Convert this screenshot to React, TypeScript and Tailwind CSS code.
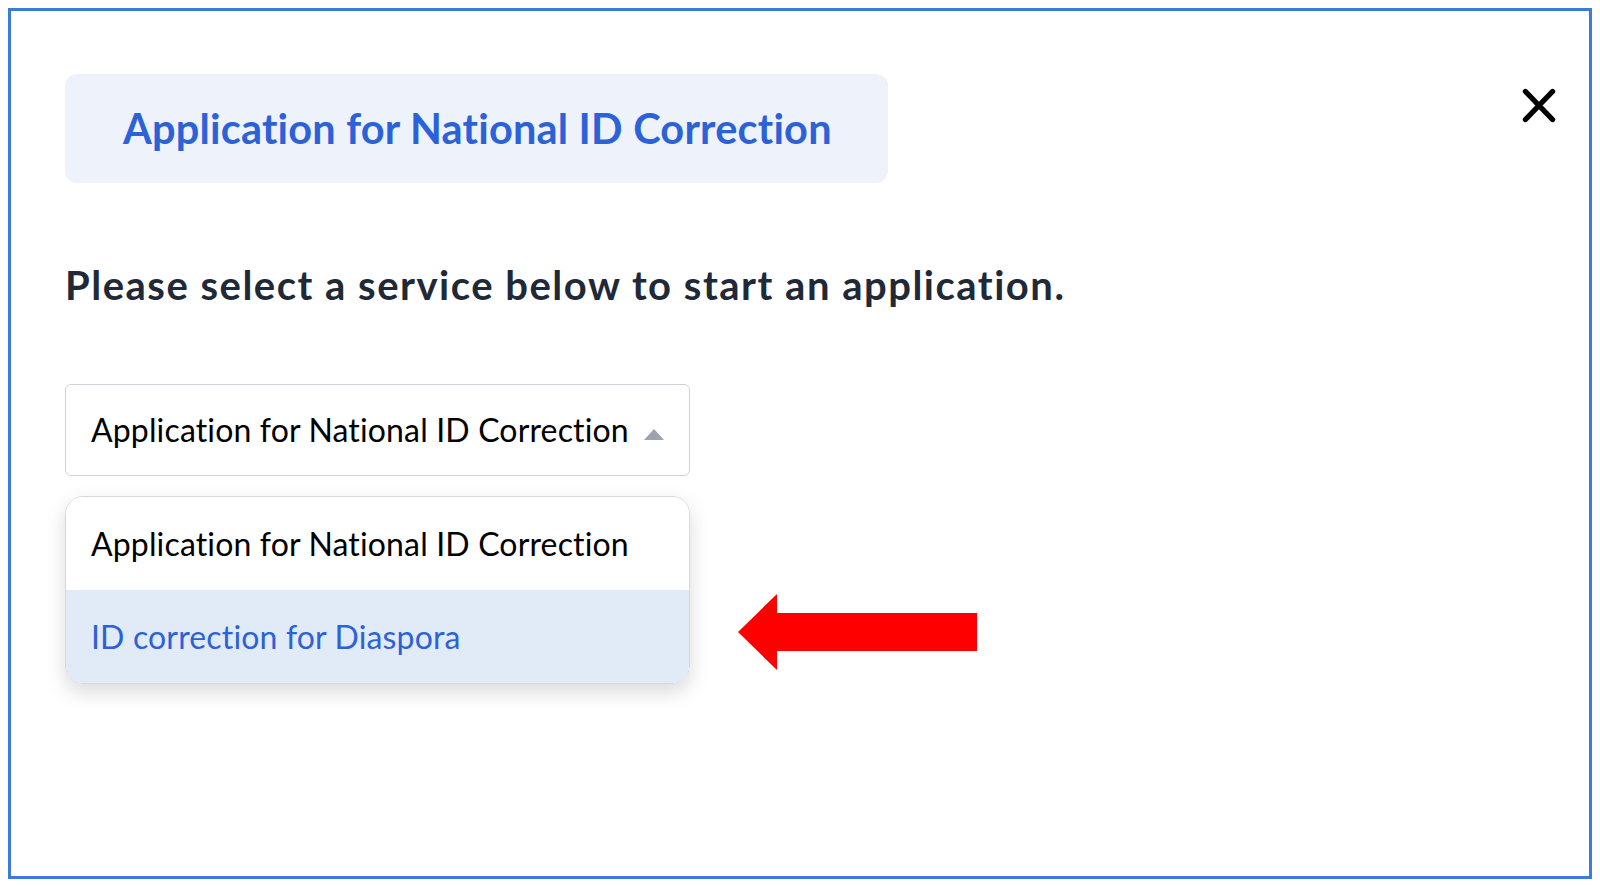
const font = { fontFamily: "Lato, 'Noto Sans', sans-serif" };

const Caret = () => (
  <svg width="20" height="11" viewBox="0 0 20 11" className="shrink-0 mt-[8px]">
    <polygon points="10,0 20,11 0,11" fill="#9ca3af" />
  </svg>
);

const CloseIcon = () => (
  <svg width="34" height="35" viewBox="0 0 34 35">
    <path d="M3.5 3.5 L30.5 31.5 M30.5 3.5 L3.5 31.5" stroke="#000" strokeWidth="5.4" strokeLinecap="round" />
  </svg>
);

const RedArrow = () => (
  <svg width="240" height="76" viewBox="0 0 240 76" className="mt-[98px] ml-[48px] shrink-0">
    <polygon points="0,38 39,0 39,19 239,19 239,57 39,57 39,76" fill="#ff0000" />
  </svg>
);

export default function App() {
  return (
    <div className="w-full h-[887px] bg-white p-2 [font-variant-ligatures:none]" style={font}>
      <div className="relative h-[871px] border-[3px] border-[#3a7bdc] pl-[54px] pt-[63px]">
        <div className="flex items-start justify-between pr-[33px]">
          <div className="w-[823px] h-[109px] rounded-xl bg-[#eef2fb] flex items-center pl-[58px]">
            <h1 className="text-[41.5px] font-bold text-[#2c62d8] tracking-[0.2px]">
              Application for National ID Correction
            </h1>
          </div>
          <button className="mt-[14px] text-black">
            <CloseIcon />
          </button>
        </div>

        <p className="mt-[78px] text-[40px] font-bold text-[#1f2937] leading-[48px] tracking-[1.5px]">
          Please select a service below to start an application.
        </p>

        <div className="mt-[75px] w-[625px] h-[92px] rounded-md border border-[#cfd4da] flex items-center justify-between pl-[25px] pr-[25px]">
          <span className="text-[32px] text-black tracking-[0.15px]">Application for National ID Correction</span>
          <Caret />
        </div>

        <div className="flex items-start mt-[20px]">
          <div className="w-[625px] rounded-[18px] border border-[#d6dadf] overflow-hidden shadow-[0_8px_20px_rgba(0,0,0,0.15)] shrink-0">
            <div className="h-[93px] bg-white flex items-center pl-[25px] text-[32px] text-black tracking-[0.15px]">
              Application for National ID Correction
            </div>
            <div className="h-[93px] bg-[#e1ebf8] flex items-center pl-[25px] text-[32px] text-[#2c62d8] tracking-[0.15px]">
              ID correction for Diaspora
            </div>
          </div>
          <RedArrow />
        </div>
      </div>
    </div>
  );
}
